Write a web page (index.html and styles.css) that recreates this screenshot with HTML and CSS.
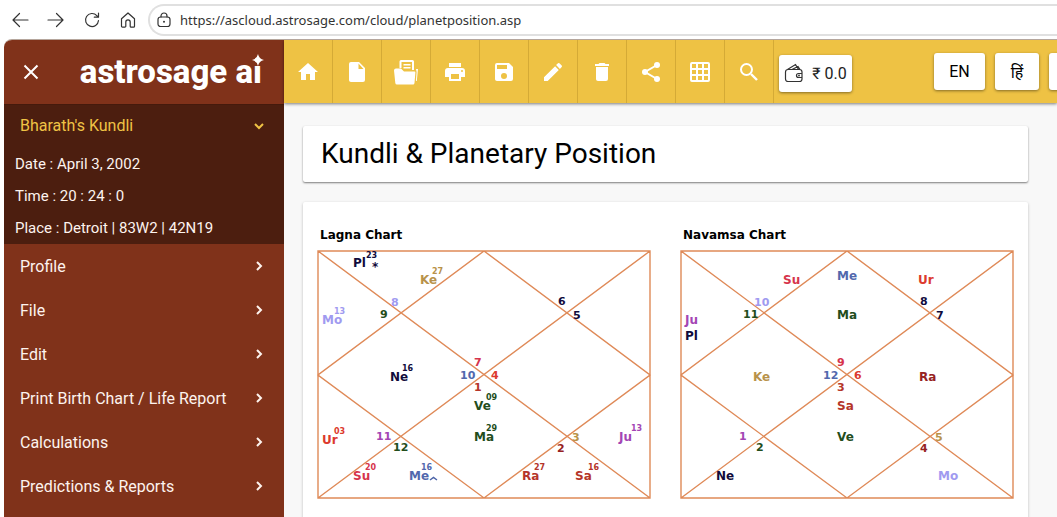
FILE: index.html
```
<!DOCTYPE html>
<html lang="en">
<head>
<meta charset="utf-8">
<title>Kundli &amp; Planetary Position</title>
<link rel="stylesheet" href="styles.css">
</head>
<body>
<div class="browser">
  <button class="nav-btn" aria-label="Back"><svg width="18" height="18" viewBox="0 0 18 18"><path d="M17 9H2M8.500 2.500L2 9l6.500 6.500"/></svg></button>
  <button class="nav-btn" aria-label="Forward"><svg width="18" height="18" viewBox="0 0 18 18"><path d="M1 9h15M9.500 2.500L16 9l-6.500 6.500"/></svg></button>
  <button class="nav-btn" aria-label="Reload"><svg width="18" height="18" viewBox="0 0 18 18"><path d="M15.500 9.500A6.500 6.500 0 1 1 13.800 4.600L15.300 6M15.500 2v4.200h-4.200"/></svg></button>
  <button class="nav-btn" aria-label="Home page"><svg width="18" height="18" viewBox="0 0 18 18"><path d="M2.500 7.800L9 2l6.500 5.800v7.400a1 1 0 0 1-1 1h-2.300a1 1 0 0 1-1-1V11a2 2 0 0 0-4.400 0v4.200a1 1 0 0 1-1 1H3.500a1 1 0 0 1-1-1z"/></svg></button>
  <div class="address">
    <svg width="16" height="16" viewBox="0 0 16 16"><rect x="2" y="5" width="12" height="9.500" rx="2.500"/><path d="M5 5V4a3 3 0 0 1 6 0v1"/><circle class="dot" cx="8" cy="9.800" r="1"/></svg>
    <input class="url" type="text" aria-label="Address" value="https://ascloud.astrosage.com/cloud/planetposition.asp">
  </div>
</div>
<div class="app">
  <aside class="sidebar">
    <div class="brand">
      <button class="close" aria-label="Close menu"><svg width="16" height="16" viewBox="0 0 16 16"><path d="M1.500 1.500l13 13M14.500 1.500l-13 13"/></svg></button>
      <a class="logo" href="#">astrosage ai<svg class="star" width="12" height="12" viewBox="0 0 12 12"><path d="M6 0Q7 5 12 6Q7 7 6 12Q5 7 0 6Q5 5 6 0z"/></svg></a>
    </div>
    <section class="kundli">
      <button class="menu-item current">Bharath's Kundli<svg class="chev" width="10" height="10" viewBox="0 0 10 10"><path d="M1 3l4 4 4-4"/></svg></button>
      <p>Date : April 3, 2002</p>
      <p>Time : 20 : 24 : 0</p>
      <p>Place : Detroit | 83W2 | 42N19</p>
    </section>
    <nav>
      <button class="menu-item">Profile<svg class="chev" width="10" height="10" viewBox="0 0 10 10"><path d="M3 1l4 4-4 4"/></svg></button>
      <button class="menu-item">File<svg class="chev" width="10" height="10" viewBox="0 0 10 10"><path d="M3 1l4 4-4 4"/></svg></button>
      <button class="menu-item">Edit<svg class="chev" width="10" height="10" viewBox="0 0 10 10"><path d="M3 1l4 4-4 4"/></svg></button>
      <button class="menu-item">Print Birth Chart / Life Report<svg class="chev" width="10" height="10" viewBox="0 0 10 10"><path d="M3 1l4 4-4 4"/></svg></button>
      <button class="menu-item">Calculations<svg class="chev" width="10" height="10" viewBox="0 0 10 10"><path d="M3 1l4 4-4 4"/></svg></button>
      <button class="menu-item">Predictions &amp; Reports<svg class="chev" width="10" height="10" viewBox="0 0 10 10"><path d="M3 1l4 4-4 4"/></svg></button>
    </nav>
  </aside>
  <div class="content">
    <header class="toolbar">
      <button class="tool" aria-label="Home"><svg width="24" height="24" viewBox="0 0 24 24"><path d="M10 20v-6h4v6h5v-8h3L12 3 2 12h3v8z"/></svg></button>
      <button class="tool" aria-label="New"><svg width="24" height="24" viewBox="0 0 24 24"><path d="M6 2a2 2 0 0 0-2 2v16c0 1.100.9 2 2 2h12a2 2 0 0 0 2-2V8l-6-6H6zm7.500 1.500L18.500 9h-5z"/></svg></button>
      <button class="tool" aria-label="Open"><svg width="26" height="26" viewBox="0 0 26 26"><path d="M6.500 9V2.500Q6.500 1 8 1h11.500Q21 1 21 2.500V11h-2V3H8.500v6zM10.500 5h7v1.500h-7zM10.500 8h7v1.500h-7zM3 9.500h5l3 3h10.500q1 0 .9 1L21.500 24q-.2 1.500-1.500 1.500H4q-1.500 0-1.700-1.500L1 11.500q0-2 2-2zM23 10h2l-1.200 12h-.9l.7-9z"/></svg></button>
      <button class="tool" aria-label="Print"><svg width="24" height="24" viewBox="0 0 24 24"><path fill-rule="evenodd" d="M19 8H5a3 3 0 0 0-3 3v6h4v4h12v-4h4v-6a3 3 0 0 0-3-3zm-3 11H8v-5h8zm3-7a1 1 0 1 1 0-2 1 1 0 0 1 0 2zM18 3H6v4h12z"/></svg></button>
      <button class="tool" aria-label="Save"><svg width="24" height="24" viewBox="0 0 24 24"><path fill-rule="evenodd" d="M17 3H5a2 2 0 0 0-2 2v14c0 1.100.9 2 2 2h14a2 2 0 0 0 2-2V7zm-5 16a3 3 0 1 1 0-6 3 3 0 0 1 0 6zm3-10H5V5h10z"/></svg></button>
      <button class="tool" aria-label="Edit"><svg width="24" height="24" viewBox="0 0 24 24"><path d="M3 17.300V21h3.700L17.800 9.900l-3.700-3.700zM20.700 7a1 1 0 0 0 0-1.400l-2.300-2.300a1 1 0 0 0-1.400 0l-1.900 1.800 3.800 3.800z"/></svg></button>
      <button class="tool" aria-label="Delete"><svg width="24" height="24" viewBox="0 0 24 24"><path d="M6 19c0 1.100.9 2 2 2h8a2 2 0 0 0 2-2V7H6zM19 4h-3.500l-1-1h-5l-1 1H5v2h14z"/></svg></button>
      <button class="tool" aria-label="Share"><svg width="24" height="24" viewBox="0 0 24 24"><path d="M18 5L6 12l12 7" fill="none" stroke="#fff" stroke-width="2"/><circle cx="18" cy="5" r="3"/><circle cx="6" cy="12" r="3"/><circle cx="18" cy="19" r="3"/></svg></button>
      <button class="tool" aria-label="Tables"><svg width="24" height="24" viewBox="0 0 24 24"><path fill-rule="evenodd" d="M4 2h16a2 2 0 0 1 2 2v16a2 2 0 0 1-2 2H4a2 2 0 0 1-2-2V4a2 2 0 0 1 2-2zM4 4v4h4V4zm6 0v4h4V4zm6 0v4h4V4zM4 10v4h4v-4zm6 0v4h4v-4zm6 0v4h4v-4zM4 16v4h4v-4zm6 0v4h4v-4zm6 0v4h4v-4z"/></svg></button>
      <button class="tool" aria-label="Search"><svg width="24" height="24" viewBox="0 0 24 24"><g fill="none" stroke="#fff" stroke-width="2"><circle cx="9.500" cy="9.500" r="5.500"/><path d="M14 14l6 6" stroke-width="2.400"/></g></svg></button>
      <button class="chip wallet"><svg width="20" height="20" viewBox="0 0 20 20"><rect x="1.500" y="6.500" width="16.500" height="12" rx="2.500"/><path d="M3.500 6.500L11.500 1.500l3 5M8 6.500l6-3 2 3M18 10.500h-3.500a2 2 0 0 0 0 4H18"/><circle cx="15" cy="12.500" r=".4"/></svg>₹ 0.0</button>
      <div class="langs">
        <button class="chip en">EN</button>
        <button class="chip lang">हिं</button>
        <button class="chip lang" aria-label="More languages"></button>
      </div>
    </header>
    <main class="page">
      <h1 class="card title">Kundli &amp; Planetary Position</h1>
      <section class="card charts">
        <figure class="chart">
          <figcaption>Lagna Chart</figcaption>
          <svg viewBox="0 0 334 249" role="img" aria-label="Lagna Chart">
            <path class="frame" d="M1 1H333V248H1zM1 1L333 248M333 1L1 248M167 1L333 125 167 248 1 125z"/>
            <g class="planet">
              <text x="36" y="17" class="navy">Pl</text><text x="55" y="21" class="navy">*</text>
              <text x="103" y="34" class="gold">Ke</text>
              <text x="5" y="74" class="lilac">Mo</text>
              <text x="73" y="131" class="navy">Ne</text>
              <text x="157" y="160" class="green">Ve</text>
              <text x="157" y="191" class="green">Ma</text>
              <text x="5" y="194" class="red">Ur</text>
              <text x="36" y="230" class="rose">Su</text>
              <text x="92" y="230" class="blue">Me</text><path class="caret" d="M113 230l3.500-2.500 3.500 2.500"/>
              <text x="205" y="230" class="brick">Ra</text>
              <text x="258" y="230" class="brick">Sa</text>
              <text x="302" y="191" class="purple">Ju</text>
            </g>
            <g class="degree">
              <text x="49" y="8" class="navy">23</text>
              <text x="115" y="24" class="gold">27</text>
              <text x="17" y="64" class="lilac">13</text>
              <text x="85" y="121" class="navy">16</text>
              <text x="169" y="150" class="green">09</text>
              <text x="169" y="181" class="green">29</text>
              <text x="17" y="184" class="red">03</text>
              <text x="48" y="220" class="rose">20</text>
              <text x="104" y="220" class="blue">16</text>
              <text x="217" y="220" class="brick">27</text>
              <text x="271" y="220" class="brick">16</text>
              <text x="314" y="181" class="purple">13</text>
            </g>
            <g class="house">
              <text x="74" y="56" class="lilac">8</text><text x="63" y="68" class="green">9</text>
              <text x="241" y="55" class="navy">6</text><text x="256" y="69" class="navy">5</text>
              <text x="157" y="116" class="rose">7</text><text x="143" y="129" class="blue">10</text>
              <text x="174" y="129" class="red">4</text><text x="157" y="141" class="brick">1</text>
              <text x="59" y="190" class="purple">11</text><text x="76" y="201" class="green">12</text>
              <text x="255" y="191" class="gold">3</text><text x="240" y="202" class="wine">2</text>
            </g>
          </svg>
        </figure>
        <figure class="chart">
          <figcaption>Navamsa Chart</figcaption>
          <svg viewBox="0 0 334 249" role="img" aria-label="Navamsa Chart">
            <path class="frame" d="M1 1H333V248H1zM1 1L333 248M333 1L1 248M167 1L333 125 167 248 1 125z"/>
            <g class="planet">
              <text x="103" y="34" class="rose">Su</text>
              <text x="157" y="30" class="blue">Me</text>
              <text x="238" y="34" class="red">Ur</text>
              <text x="157" y="69" class="green">Ma</text>
              <text x="5" y="74" class="purple">Ju</text>
              <text x="5" y="90" class="navy">Pl</text>
              <text x="73" y="131" class="gold">Ke</text>
              <text x="239" y="131" class="wine">Ra</text>
              <text x="157" y="160" class="brick">Sa</text>
              <text x="157" y="191" class="green">Ve</text>
              <text x="36" y="230" class="navy">Ne</text>
              <text x="258" y="230" class="lilac">Mo</text>
            </g>
            <g class="house">
              <text x="74" y="56" class="lilac">10</text><text x="63" y="68" class="green">11</text>
              <text x="240" y="55" class="navy">8</text><text x="256" y="69" class="navy">7</text>
              <text x="157" y="116" class="rose">9</text><text x="143" y="129" class="blue">12</text>
              <text x="174" y="129" class="red">6</text><text x="157" y="141" class="brick">3</text>
              <text x="59" y="190" class="purple">1</text><text x="76" y="201" class="green">2</text>
              <text x="255" y="191" class="gold">5</text><text x="240" y="202" class="wine">4</text>
            </g>
          </svg>
        </figure>
      </section>
    </main>
  </div>
</div>
</body>
</html>
```
FILE: styles.css
```
* { box-sizing: border-box; }
body { margin: 0; height: 100vh; display: flex; flex-direction: column; overflow: hidden; background: #fff; font-family: Roboto, "Noto Sans", sans-serif; font-size: 16px; color: #000; }
button { border: 0; padding: 0; background: none; font: inherit; color: inherit; display: flex; align-items: center; }
.browser { flex: none; display: flex; align-items: center; height: 39px; padding-left: 11px; gap: 18px; }
.nav-btn { width: 18px; height: 20px; }
.nav-btn svg, .address svg { fill: none; stroke: #333; stroke-width: 1.2; stroke-linecap: round; stroke-linejoin: round; }
.address .dot { fill: #333; stroke: none; }
.address { flex: 1; display: flex; align-items: center; gap: 8px; height: 32px; margin-left: -7px; padding-left: 6px; border: 2px solid #e0e0e0; border-right: 0; border-radius: 16px 0 0 16px; }
.address svg { flex: none; }
.url { flex: 1; border: 0; padding: 0; outline: 0; background: none; font: 13px "Noto Sans", "Open Sans", sans-serif; color: #333; }
.app { flex: 1; min-height: 0; display: flex; margin-left: 4px; border-top: 1px solid #b5a69c; border-top-left-radius: 8px; overflow: hidden; background: #f8f8f8; }

.sidebar { flex: none; width: 280px; background: #80321a; color: #fdf3ee; }
.brand { display: flex; align-items: center; justify-content: space-between; height: 64px; padding: 0 22px 0 19px; }
.close svg { fill: none; stroke: #fff; stroke-width: 2; }
.logo { position: relative; color: #fff; font-weight: 800; font-size: 33px; line-height: 40px; text-decoration: none; }
.star { position: absolute; right: -2px; top: 2px; background: #80321a; fill: #fff; }
.kundli { background: #4c1e0f; border-top: 1px solid #451a0c; }
.kundli p { margin: 0; padding-left: 11px; font-size: 15px; line-height: 32px; }
.menu-item { width: 100%; height: 44px; padding: 0 20px 0 16px; justify-content: space-between; }
.current { height: 41px; margin-bottom: 2px; color: #efc345; }
.chev { fill: none; stroke: currentColor; stroke-width: 2; }

.content { flex: 1; min-width: 0; display: flex; flex-direction: column; }
.toolbar { flex: none; position: relative; display: flex; align-items: center; height: 63px; background: #eec244; box-shadow: 0 1px 3px rgba(0,0,0,.5); overflow: hidden; }
.tool { flex: none; width: 49px; height: 100%; justify-content: center; border-right: 1px solid #d4aa36; }
.tool svg { fill: #fff; }
.chip { flex: none; height: 37px; justify-content: center; border-radius: 3px; background: #fff; box-shadow: 0 1px 3px rgba(0,0,0,.45); }
.wallet { width: 73px; margin: 3px 0 0 5px; gap: 8px; color: #222; }
.wallet svg { fill: none; stroke: #333; stroke-width: 1.2; }
.langs { display: flex; gap: 10px; margin: 0 -36px 0 auto; }
.en { width: 51px; }
.lang { width: 44px; }

.page { padding: 23px 29px 0 19px; display: flex; flex-direction: column; gap: 20px; flex: 1; min-height: 0; }
.card { background: #fff; border-radius: 2px; box-shadow: 0 1px 2px rgba(0,0,0,.5); }
.title { flex: none; margin: 0; padding: 8px 18px; font-weight: 400; font-size: 28px; line-height: 40px; }
.charts { flex: none; display: grid; grid-template-columns: 1fr 1fr; gap: 29px; padding: 24px 14px 40px; box-shadow: 0 1px 3px rgba(0,0,0,.25); }
.chart { margin: 0; font-family: Verdana, "DejaVu Sans", sans-serif; font-weight: 700; }
.chart figcaption { padding-left: 3px; font-size: 12px; line-height: 18px; margin-bottom: 6px; }
.chart svg { display: block; width: 100%; }
.frame { fill: none; stroke: #df8a58; stroke-width: 1.4; }
.planet { font-size: 12px; }
.house { font-size: 11px; }
.degree { font-size: 8px; }
.caret { fill: none; stroke: #4c64a8; stroke-width: 1.5; }
.navy { fill: #110b3c; }
.gold { fill: #b8924a; }
.lilac { fill: #a09af0; }
.green { fill: #234d1c; }
.red { fill: #dc3a2e; }
.rose { fill: #d6344c; }
.blue { fill: #5268ad; }
.brick { fill: #b5352a; }
.wine { fill: #962222; }
.purple { fill: #a346b4; }
```
